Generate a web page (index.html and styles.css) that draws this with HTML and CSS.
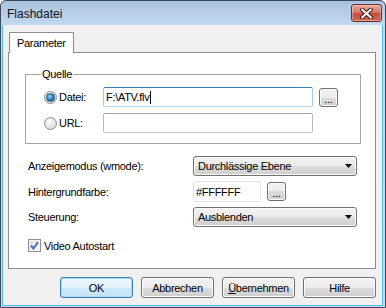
FILE: index.html
```html
<!DOCTYPE html>
<html lang="de">
<head>
    <meta charset="UTF-8">
    <meta name="viewport" content="width=device-width, initial-scale=1.0">
    <title>Flashdatei</title>
    <link rel="stylesheet" href="styles.css">
</head>
<body>
    <div class="window">
        <div class="titlebar">
            <span class="title">Flashdatei</span>
            <button class="close" title="Schließen">
                <svg width="13" height="11" viewBox="0 0 13 11">
                    <path d="M2 1.5 L11 9.5 M11 1.5 L2 9.5" stroke="#3b1410" stroke-width="4" stroke-linecap="round"/>
                    <path d="M2 1.5 L11 9.5 M11 1.5 L2 9.5" stroke="#fff" stroke-width="2.2" stroke-linecap="round"/>
                </svg>
            </button>
        </div>
        <div class="client">
            <div class="tabs">
                <span class="tab">Parameter</span>
            </div>
            <div class="panel">
                <fieldset class="group">
                    <legend>Quelle</legend>
                    <div class="source-grid">
                        <label class="radio"><span class="radio-dot checked"></span>Datei:</label>
                        <span class="textbox focused">F:\ATV.flv<span class="caret"></span></span>
                        <button class="btn dots">...</button>

                        <label class="radio"><span class="radio-dot"></span>URL:</label>
                        <span class="textbox"></span>
                        <span></span>
                    </div>
                </fieldset>

                <div class="fields">
                    <label>Anzeigemodus (wmode):</label>
                    <div class="combo">
                        <span>Durchlässige Ebene</span>
                        <svg width="7" height="4" viewBox="0 0 7 4"><polygon points="0,0 7,0 3.5,4" fill="#000"/></svg>
                    </div>

                    <label>Hintergrundfarbe:</label>
                    <div class="color-field">
                        <span class="textbox color">#FFFFFF</span>
                        <button class="btn dots">...</button>
                    </div>

                    <label>Steuerung:</label>
                    <div class="combo">
                        <span>Ausblenden</span>
                        <svg width="7" height="4" viewBox="0 0 7 4"><polygon points="0,0 7,0 3.5,4" fill="#000"/></svg>
                    </div>
                </div>

                <label class="check">
                    <span class="check-box">
                        <svg width="9" height="9" viewBox="0 0 9 9"><path d="M1 4.5 L3.5 7.5 L8 1" fill="none" stroke="#4a6db0" stroke-width="2"/></svg>
                    </span>
                    Video Autostart
                </label>
            </div>

            <div class="buttons">
                <button class="btn default">OK</button>
                <button class="btn">Abbrechen</button>
                <button class="btn"><u>Ü</u>bernehmen</button>
                <button class="btn">Hilfe</button>
            </div>
        </div>
    </div>
</body>
</html>
```

FILE: styles.css
```css
* {
    box-sizing: border-box;
}
body {
    margin: 0;
    font-family: "Liberation Sans", Arial, sans-serif;
    font-size: 11px;
    letter-spacing: -0.3px;
    color: #000;
}
.window {
    width: 386px;
    height: 308px;
    border: 1px solid #3f4a56;
    border-radius: 6px 6px 0 0;
    background: linear-gradient(#a9c3e0, #c2d8ef 24px, #c6dbf1);
    display: flex;
    flex-direction: column;
}
.titlebar {
    height: 24px;
    display: flex;
    justify-content: space-between;
    align-items: flex-start;
}
.title {
    font-size: 12px;
    letter-spacing: 0;
    line-height: 14px;
    padding: 6px 0 0 6px;
    color: #111;
}
.close {
    width: 31px;
    height: 18px;
    margin: 3px 3px 0 0;
    padding: 0;
    border: 1px solid #6b2a23;
    border-radius: 3px;
    background: linear-gradient(#eaa896, #d77b6b 45%, #c24b3c 55%, #cf6a55);
    box-shadow: inset 0 0 0 1px rgba(255, 255, 255, 0.35);
    display: flex;
    align-items: center;
    justify-content: center;
}
.client {
    flex: 1;
    margin: 0 2px 1px 1px;
    border: 1px solid #4cbde9;
    border-top: none;
    background-color: #f0f0f0;
    display: flex;
    flex-direction: column;
}
.tabs {
    display: flex;
    padding: 7px 0 0 6px;
}
.tab {
    position: relative;
    z-index: 1;
    height: 21px;
    margin-bottom: -1px;
    padding: 1px 7px 0 7px;
    line-height: 18px;
    border: 1px solid #898c95;
    border-bottom: none;
    background-color: #fff;
}
.panel {
    width: 368px;
    height: 217px;
    margin-left: 5px;
    padding: 15px 14px 0 16px;
    border: 1px solid #898c95;
    background-color: #fff;
}
.group {
    margin: 0;
    padding: 6px 0 10px 18px;
    border: 1px solid #a5a5a5;
}
.group legend {
    margin-left: -3px;
    padding: 0 1px;
    line-height: 13px;
}
.source-grid {
    display: grid;
    grid-template-columns: 53px 210px 19px;
    column-gap: 6px;
    row-gap: 6px;
    align-items: center;
}
.radio {
    display: flex;
    align-items: center;
    gap: 2px;
}
.radio-dot {
    width: 13px;
    height: 13px;
    border-radius: 50%;
    border: 1px solid #8e8f8f;
    background: radial-gradient(circle at 40% 35%, #fdfdfd, #d6d6d6 80%);
    display: flex;
    align-items: center;
    justify-content: center;
}
.radio-dot.checked::after {
    content: "";
    width: 7px;
    height: 7px;
    border-radius: 50%;
    background: radial-gradient(circle at 40% 35%, #8fd6fb, #2a7fbf 55%, #1d4f7e);
    border: 1px solid #25537d;
}
.textbox {
    display: flex;
    align-items: center;
    height: 20px;
    padding-left: 2px;
    border: 1px solid #abadb3;
    border-color: #a3a5ab #b8bac0 #c4c6cc #b8bac0;
    border-radius: 2px;
    background-color: #fff;
    white-space: pre;
}
.textbox.focused {
    border-color: #3d7bad #a4c9e3 #b7d9ed #a4c9e3;
}
.caret {
    display: inline-block;
    width: 1px;
    height: 13px;
    margin-left: 1px;
    background-color: #000;
}
.btn {
    font-family: inherit;
    font-size: 11px;
    letter-spacing: -0.3px;
    color: #000;
    padding: 0;
    border: 1px solid #707070;
    border-radius: 3px;
    background: linear-gradient(#f2f2f2 0%, #ebebeb 50%, #dddddd 50%, #cfcfcf 100%);
    box-shadow: inset 0 0 0 1px #fcfcfc;
}
.btn.default {
    border-color: #3c7fb1;
    background: linear-gradient(#eef7fd 0%, #e3f2fc 50%, #cfe9fa 50%, #c4e3f8 100%);
    box-shadow: inset 0 0 0 1px #a6dcf7;
}
.dots {
    width: 19px;
    height: 19px;
    line-height: 20px;
    align-self: start;
    margin-top: 1px;
}
.fields {
    display: grid;
    grid-template-columns: 165px 164px;
    row-gap: 5px;
    align-items: center;
    margin-top: 12px;
    padding-left: 3px;
}
.combo {
    height: 20px;
    display: flex;
    align-items: center;
    justify-content: space-between;
    padding: 0 4px;
    border: 1px solid #707070;
    border-radius: 3px;
    background: linear-gradient(#f2f2f2 0%, #ebebeb 50%, #dddddd 50%, #cfcfcf 100%);
    box-shadow: inset 0 0 0 1px #fcfcfc;
}
.color-field {
    display: flex;
    align-items: flex-start;
    gap: 6px;
}
.textbox.color {
    width: 68px;
    height: 21px;
    border-color: #e0e3e8;
}
.check {
    display: flex;
    align-items: center;
    gap: 3px;
    margin-top: 12px;
    padding-left: 3px;
}
.check-box {
    width: 13px;
    height: 13px;
    border: 1px solid #8e8f8f;
    background: linear-gradient(135deg, #dcdcdc, #fbfbfb);
    box-shadow: inset 0 0 0 1px #f4f4f4;
    display: flex;
    align-items: center;
    justify-content: center;
}
.buttons {
    display: flex;
    justify-content: flex-end;
    gap: 8px;
    margin-top: 8px;
    padding-right: 6px;
}
.buttons .btn {
    width: 73px;
    height: 21px;
}
.buttons u {
    text-decoration-thickness: 1px;
}
```
